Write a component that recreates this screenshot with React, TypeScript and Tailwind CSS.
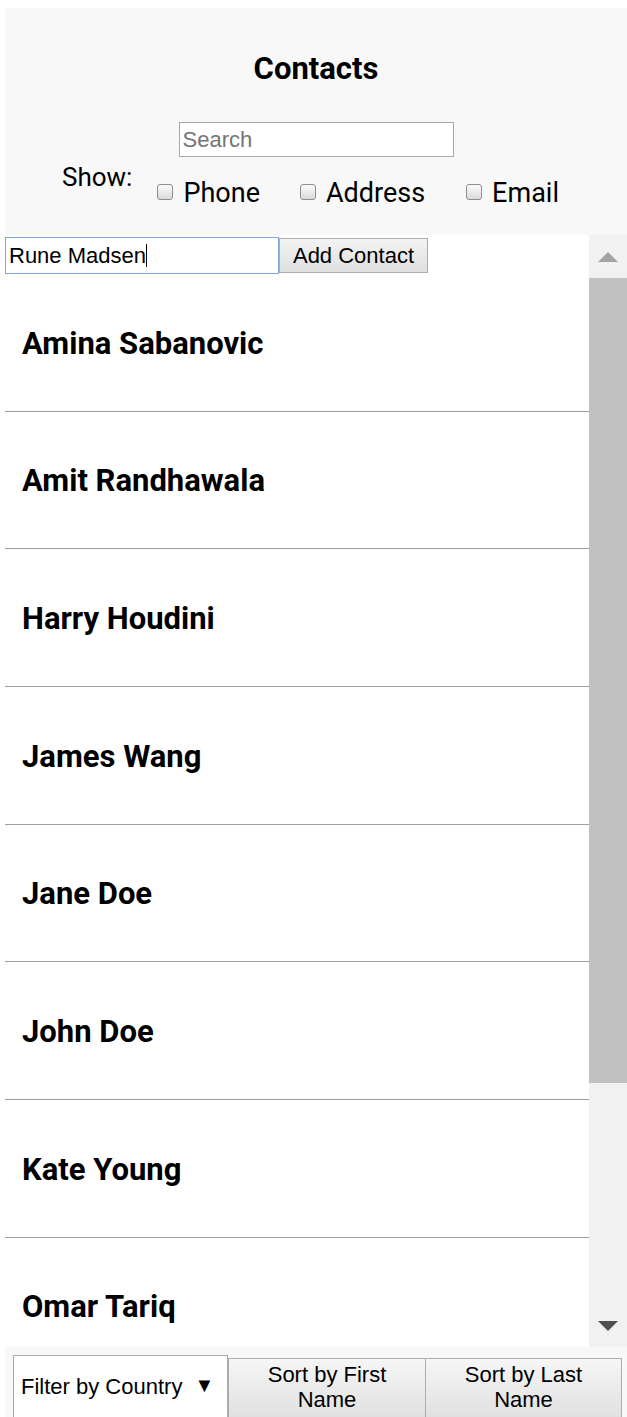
import React from "react";

const contacts = [
  "Amina Sabanovic",
  "Amit Randhawala",
  "Harry Houdini",
  "James Wang",
  "Jane Doe",
  "John Doe",
  "Kate Young",
  "Omar Tariq",
];

const roboto = { fontFamily: "Roboto, 'Noto Sans', sans-serif" };
const arial = { fontFamily: "'Liberation Sans', Arial, sans-serif" };

const CheckItem = ({ label, className }: { label: string; className?: string }) => (
  <label className={`flex items-center ${className ?? ""}`}>
    <span className="w-[16px] h-[16px] rounded-[3px] border border-[#8e8e8e] bg-gradient-to-b from-[#fbfbfb] to-[#dadada] mr-[10px] mt-[-3px]" />
    <span className="text-[27px] leading-[30px] text-black">{label}</span>
  </label>
);

export default function App() {
  return (
    <div className="bg-white pl-[5px] pt-[8px] h-[1417px] overflow-hidden" style={roboto}>
      <div className="bg-[#f8f8f8] h-[1409px] flex flex-col">
        {/* header */}
        <div className="h-[227px] shrink-0">
          <h1 className="mt-[43px] text-center text-[31px] leading-[36px] font-bold text-black">Contacts</h1>
          <div className="mt-[35px] flex justify-center">
            <input
              placeholder="Search"
              className="w-[275px] h-[35px] border border-[#a9a9a9] bg-white px-[3px] text-[22px] placeholder:text-[#757575] outline-none"
              style={arial}
            />
          </div>
          <div className="flex items-start pl-[57px]">
            <span className="mt-[5px] text-[26px] leading-[30px] text-black">Show:</span>
            <div className="mt-[21px] ml-[25px] flex">
              <CheckItem label="Phone" />
              <CheckItem label="Address" className="ml-[40px]" />
              <CheckItem label="Email" className="ml-[41px]" />
            </div>
          </div>
        </div>

        {/* list */}
        <div className="h-[1112px] shrink-0 flex bg-white">
          <div className="flex-1 overflow-hidden">
            <div className="flex items-center pt-[2px]">
              <div
                className="w-[274px] h-[37px] border border-[#7ea6d8] flex items-center pl-[3px] text-[22px] text-black"
                style={arial}
              >
                Rune Madsen
                <span className="w-px h-[23px] bg-black" />
              </div>
              <button
                className="w-[149px] h-[35px] border border-[#adadad] bg-gradient-to-b from-[#f4f4f4] to-[#dfdfdf] text-[22px] text-black"
                style={arial}
              >
                Add Contact
              </button>
            </div>
            {contacts.map((name) => (
              <div key={name} className="h-[137.67px] border-b border-[#9e9e9e] flex items-center pl-[17px] pt-[3px]">
                <h3 className="text-[31px] font-bold text-black">{name}</h3>
              </div>
            ))}
          </div>
          {/* scrollbar */}
          <div className="w-[38px] bg-[#f1f1f1] flex flex-col">
            <div className="h-[43px] flex items-center justify-center">
              <svg width="20" height="10" viewBox="0 0 20 10">
                <polygon points="10,0 20,10 0,10" fill="#a3a3a3" />
              </svg>
            </div>
            <div className="h-[805px] bg-[#c1c1c1]" />
            <div className="flex-1" />
            <div className="h-[43px] flex items-center justify-center">
              <svg width="20" height="10" viewBox="0 0 20 10">
                <polygon points="0,0 20,0 10,10" fill="#505050" />
              </svg>
            </div>
          </div>
        </div>

        {/* bottom bar */}
        <div className="flex-1 flex items-start pl-[8px] overflow-hidden" style={arial}>
          <div className="mt-[8px] w-[215px] h-[70px] bg-white border border-[#a9a9a9] flex items-start pl-[7px] pt-[14px] text-[22px] text-black">
            Filter by Country
            <span className="ml-[12px] text-[20px]">▼</span>
          </div>
          <button className="mt-[11px] w-[198px] h-[70px] border border-[#adadad] bg-gradient-to-b from-[#f6f6f6] to-[#dddddd] flex flex-col items-center justify-start pt-[3px] text-[22px] leading-[25px] text-black">
            <span>Sort by First</span>
            <span>Name</span>
          </button>
          <button className="mt-[11px] w-[196px] h-[70px] border border-l-0 border-[#adadad] bg-gradient-to-b from-[#f6f6f6] to-[#dddddd] flex flex-col items-center justify-start pt-[3px] text-[22px] leading-[25px] text-black">
            <span>Sort by Last</span>
            <span>Name</span>
          </button>
        </div>
      </div>
    </div>
  );
}
